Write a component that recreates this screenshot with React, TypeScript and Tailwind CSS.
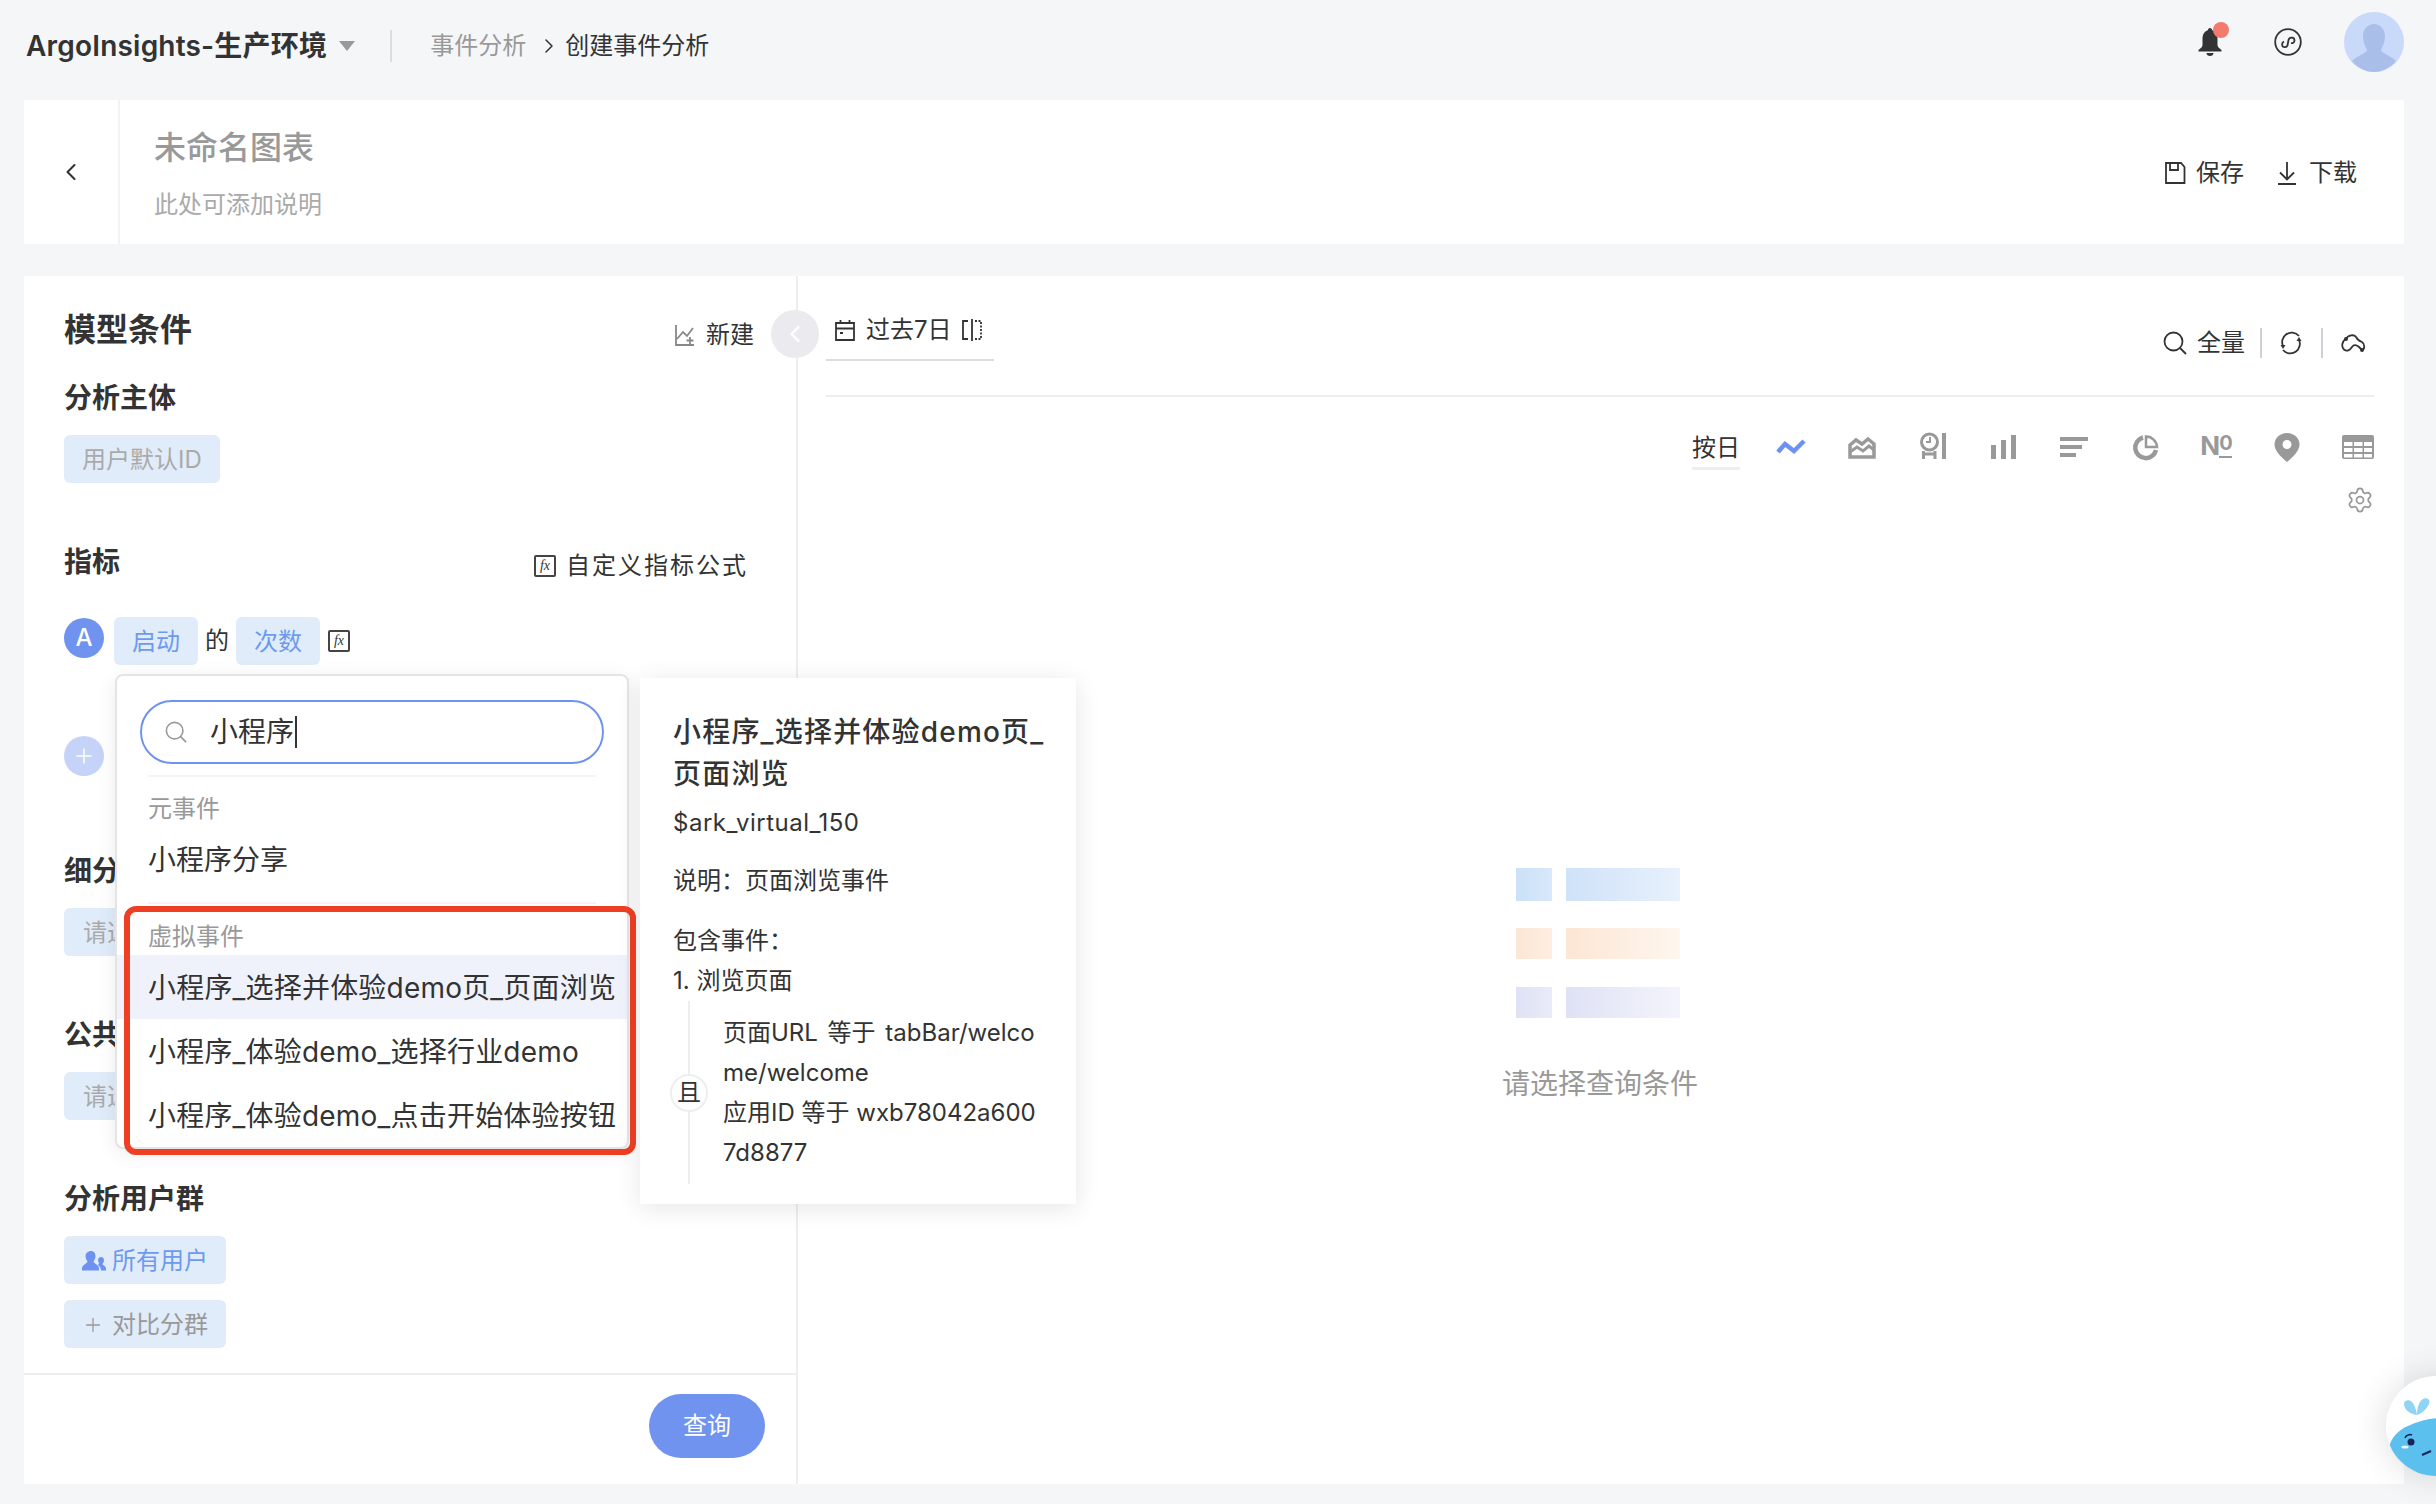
import { ChevronLeft, ChevronRight, Plus, Settings } from 'lucide-react';

function FxIcon() {
  return (
    <span className="flex h-[22px] w-[22px] items-center justify-center border-2 border-[#444] rounded-[2px] font-['Liberation_Serif',serif] text-[14px] italic leading-none text-[#333]">
      fx
    </span>
  );
}

function SearchIcon({ className, stroke }: { className: string; stroke: string }) {
  return (
    <svg className={className} viewBox="0 0 24 24" fill="none" stroke={stroke} strokeWidth="1.800">
      <circle cx="10.500" cy="10.500" r="9" />
      <path d="M17 17l6 6" />
    </svg>
  );
}

function Tag({ children, className = '' }: { children: React.ReactNode; className?: string }) {
  return (
    <div className={`flex h-12 items-center rounded-[6px] bg-[#e0ecf9] pt-px text-[24px] ${className}`}>{children}</div>
  );
}

function SectionTitle({ children, className = '' }: { children: React.ReactNode; className?: string }) {
  return <div className={`h-10 pt-px text-[28px] font-semibold leading-10 text-[#333] ${className}`}>{children}</div>;
}

function ChartTypes() {
  return (
    <div className="flex gap-[39px] text-[#999]">
      <svg className="h-8 w-8" viewBox="0 0 32 32" fill="none" stroke="#6d91f0" strokeWidth="4.500">
        <polyline points="4,21 11,13 20,20 30,10" />
      </svg>
      <svg className="h-8 w-8" viewBox="0 0 32 32" fill="none" stroke="#999" strokeWidth="3.500">
        <path d="M5 26V14l6-5 6 4 6-5 6 5v13z" />
        <path d="M5 21l7-5 6 4 6-5 5 4" strokeWidth="3" />
      </svg>
      <svg className="h-8 w-8" viewBox="0 0 32 32" fill="none" stroke="#999" strokeWidth="3">
        <circle cx="13.500" cy="11" r="8" />
        <path d="M14 6v5h-4" strokeWidth="2" />
        <path d="M7.500 28v-8M19 28v-8M8 23h10" />
        <path d="M28 2v26" strokeWidth="4" />
      </svg>
      <svg className="h-8 w-8" viewBox="0 0 32 32" fill="#999">
        <rect x="4" y="14" width="5" height="14" />
        <rect x="14" y="9" width="5" height="19" />
        <rect x="24" y="4" width="5" height="24" />
      </svg>
      <svg className="h-8 w-8" viewBox="0 0 32 32" fill="#999">
        <rect x="2" y="6" width="28" height="4" />
        <rect x="2" y="14" width="22" height="4" />
        <rect x="2" y="22" width="16" height="4" />
      </svg>
      <svg className="h-8 w-8" viewBox="0 0 32 32" fill="none" stroke="#999">
        <path d="M14 6.500A10.500 10.500 0 1 0 27 19" strokeWidth="4.500" />
        <path d="M17 5.500v10.500h11A11 11 0 0 0 17 5.500z" strokeWidth="2.500" fill="#fff" />
      </svg>
      <div className="relative flex h-8 w-8 items-start justify-center text-[26px] font-bold leading-[30px] tracking-[-1px] text-[#999]">
        <span>N</span>
        <span className="border-b-2 border-[#999] text-[20px] leading-[25px]">0</span>
      </div>
      <svg className="h-8 w-8" viewBox="0 0 32 32" fill="#999">
        <path
          fillRule="evenodd"
          d="M16 2c7 0 12.500 5 12.500 11.500 0 6-6 12-12.500 17.500C9.500 25.500 3.500 19.500 3.500 13.500 3.500 7 9 2 16 2zm0 7a4.500 4.500 0 1 0 0 9 4.500 4.500 0 0 0 0-9z"
        />
      </svg>
      <svg className="h-8 w-8" viewBox="0 0 32 32" fill="none">
        <rect x="0" y="4" width="32" height="24" rx="2" fill="#999" />
        <g fill="#fff">
          <rect x="2" y="11" width="8.500" height="4" />
          <rect x="12" y="11" width="8.500" height="4" />
          <rect x="22" y="11" width="8" height="4" />
          <rect x="2" y="17" width="8.500" height="4" />
          <rect x="12" y="17" width="8.500" height="4" />
          <rect x="22" y="17" width="8" height="4" />
          <rect x="2" y="23" width="8.500" height="3.500" />
          <rect x="12" y="23" width="8.500" height="3.500" />
          <rect x="22" y="23" width="8" height="3.500" />
        </g>
      </svg>
    </div>
  );
}

function EventDropdown() {
  const rows = ['小程序_选择并体验demo页_页面浏览', '小程序_体验demo_选择行业demo', '小程序_体验demo_点击开始体验按钮'];
  return (
    <div className="absolute left-[91px] top-[398px] z-20 w-[514px] rounded-[8px] border-2 border-[#e4e4e4] bg-white pt-6 shadow-[0_4px_20px_rgba(0,0,0,0.08)]">
      <div className="ml-[23px] flex h-16 w-[464px] items-center rounded-full border-2 border-[#6f93ee] pl-[23px]">
        <SearchIcon className="h-[22px] w-[22px]" stroke="#999" />
        <span className="ml-[23px] text-[28px] leading-8 text-[#333]">小程序</span>
        <span className="ml-px h-8 w-[2px] bg-[#333]" />
      </div>
      <div className="mx-[31px] mt-[11px] h-[2px] bg-[#f2f4f9]" />
      <div className="ml-[31px] mt-[15px] h-[35px] text-[24px] leading-[34px] text-[#999]">元事件</div>
      <div className="flex h-16 items-center px-[31px] pt-[2px] text-[28px] text-[#333]">小程序分享</div>
      <div className="mx-[31px] mt-[11px] h-[2px] bg-[#f2f4f9]" />
      <div className="ml-[31px] mt-[15px] h-[34px] pt-px text-[24px] leading-[34px] text-[#999]">虚拟事件</div>
      <div className="mt-[2px]">
        {rows.map((row, i) => (
          <div
            key={row}
            className={`flex h-16 items-center whitespace-nowrap pl-[31px] pt-[2px] text-[28px] tracking-[0.2px] text-[#333] ${i === 0 ? 'bg-[#eff2fb]' : ''}`}
          >
            {row}
          </div>
        ))}
      </div>
      <div className="absolute left-[7px] top-[230px] h-[249px] w-[512px] rounded-[12px] border-[6px] border-[#ee3f24]" />
    </div>
  );
}

function EventDetail() {
  return (
    <div className="absolute left-[616px] top-[402px] z-20 h-[526px] w-[436px] bg-white pl-[33px] pt-[33px] text-[24px] text-[#333] shadow-[0_4px_24px_rgba(0,0,0,0.1)]">
      <div className="text-[28px] font-medium leading-[42px] tracking-[1.2px]">
        <div>小程序_选择并体验demo页_</div>
        <div>页面浏览</div>
      </div>
      <div className="mt-[8px] leading-10 tracking-[0.5px]">$ark_virtual_150</div>
      <div className="mt-[18px] leading-10">说明：页面浏览事件</div>
      <div className="mt-[20px] leading-10">包含事件：</div>
      <div className="leading-10">1. 浏览页面</div>
      <div className="relative">
        <div className="absolute bottom-0 left-[15px] top-0 w-[2px] bg-[#eeeeee]" />
        <div className="absolute left-[-3px] top-[73px] flex h-[38px] w-[38px] items-center justify-center rounded-full border-2 border-[#eee] bg-white">
          且
        </div>
        <div className="whitespace-nowrap pb-[11px] pl-[50px] pt-[12px] leading-10">
          <div className="[word-spacing:3px]">页面URL 等于 tabBar/welco</div>
          <div>me/welcome</div>
          <div>应用ID 等于 wxb78042a600</div>
          <div>7d8877</div>
        </div>
      </div>
    </div>
  );
}

export default function App() {
  return (
    <div className="relative h-[1504px] w-[2436px] overflow-hidden bg-[#f5f6f8] pl-6 pr-8 font-[Inter,'Noto_Sans_CJK_SC',sans-serif]">
      {/* top bar */}
      <header className="flex h-[100px] items-center pb-4">
        <div className="mt-2 flex items-center">
          <span className="ml-[2px] text-[28px] font-semibold tracking-[0.2px] text-[#333]">ArgoInsights-生产环境</span>
          <span className="ml-[12px] h-0 w-0 border-x-[8px] border-t-[10px] border-x-transparent border-t-[#999]" />
          <span className="ml-[35px] h-8 w-[2px] bg-[#ddd]" />
          <span className="ml-[38px] text-[24px] text-[#999]">事件分析</span>
          <ChevronRight className="ml-[11px] h-6 w-6 text-[#333]" strokeWidth={1.5} />
          <span className="ml-[4px] text-[24px] text-[#333]">创建事件分析</span>
        </div>
        <div className="ml-auto flex items-center">
          <div className="relative mr-[52px]">
            <svg className="h-7 w-[24px]" viewBox="0 0 24 28" fill="#333">
              <path d="M12 0c1.500 0 2 1 2 2 4 1.500 5.500 5 5.500 9v6c0 2 2 3.500 4 5v1.500H.500V22c2-1.500 4-3 4-5v-6c0-4 1.500-7.500 5.500-9 0-1 .5-2 2-2z" />
              <path d="M8.500 25h7c0 2-1.500 3-3.500 3s-3.500-1-3.500-3z" />
            </svg>
            <span className="absolute -top-[6px] left-[15px] h-4 w-4 rounded-full bg-[#f27b6d]" />
          </div>
          <svg className="mr-[42px] h-7 w-7" viewBox="0 0 28 28" fill="none" stroke="#333" strokeWidth="1.800">
            <circle cx="14" cy="14" r="12.800" />
            <path d="M8 18.500c.5 2.500 4 3 5.500.5l1-5.500c1-3.500 6-3 6 .5 0 2-2 3-3.500 2.500M10 15c-1.200.5-2 2-2 3.500" transform="translate(0 -1.500)" />
          </svg>
          <svg className="h-[60px] w-[60px]" viewBox="0 0 60 60">
            <circle cx="30" cy="30" r="30" fill="#c9d9f9" />
            <path
              d="M30 12c6 0 11 5 11 12 0 7-3 11-4 14 0 3 9 5 15 11-5 6-13 11-22 11s-17-5-22-11c6-6 15-8 15-11-1-3-4-7-4-14 0-7 5-12 11-12z"
              fill="#a9bfea"
            />
          </svg>
        </div>
      </header>

      {/* chart title card */}
      <section className="flex h-[144px] bg-white">
        <div className="flex w-[96px] items-center justify-center border-r-2 border-[#f3f3f3]">
          <ChevronLeft className="h-7 w-7 text-[#333]" strokeWidth={1.8} />
        </div>
        <div className="flex flex-1 flex-col pl-[34px]">
          <div className="mt-[25px] h-12 text-[32px] font-medium leading-[46px] text-[#999]">未命名图表</div>
          <div className="mt-[14px] text-[24px] leading-9 text-[#aaa]">此处可添加说明</div>
        </div>
        <div className="flex items-center pr-[47px] pt-[2px] text-[24px] text-[#333]">
          <svg className="h-6 w-[22px]" viewBox="0 0 22 24" fill="none" stroke="#333" strokeWidth="1.800">
            <path d="M2 2h15l3.500 4v16H2zM6 2v7h8V2" />
          </svg>
          <span className="ml-[10px]">保存</span>
          <svg className="ml-[33px] h-6 w-[20px]" viewBox="0 0 20 24" fill="none" stroke="#333" strokeWidth="1.800">
            <path d="M10 1v17M3 11.500l7 7 7-7M1 23h18" />
          </svg>
          <span className="ml-[12px]">下载</span>
        </div>
      </section>

      {/* query + result */}
      <section className="mt-8 flex h-[1208px] bg-white">
        <aside className="relative z-10 flex w-[774px] flex-col border-r-2 border-[#eeeeee]">
          <div className="flex-1 pl-10 pr-[42px]">
            <div className="mt-7 flex h-12 items-start justify-between">
              <span className="mt-[2px] text-[32px] font-semibold leading-12 text-[#333]">模型条件</span>
              <div className="mt-[7px] flex h-12 items-center text-[24px] text-[#333]">
                <svg className="h-6 w-[22px]" viewBox="0 0 22 24" fill="none" stroke="#888" strokeWidth="1.800">
                  <path d="M2 2v20h18M3 16l6-7 4 4 6-8M16 14v7M12.500 17.500h7" />
                </svg>
                <span className="ml-[10px]">新建</span>
              </div>
            </div>
            <SectionTitle className="mt-[25px]">分析主体</SectionTitle>
            <Tag className="mt-[18px] w-[156px] justify-center text-[#aaa]">用户默认ID</Tag>
            <div className="mt-[58px] flex h-10 justify-between">
              <SectionTitle>指标</SectionTitle>
              <div className="mr-[6px] mt-[10px] flex items-center text-[24px] text-[#333]">
                <FxIcon />
                <span className="ml-[10px] tracking-[2px]">自定义指标公式</span>
              </div>
            </div>
            <div className="mt-9 flex items-center">
              <span className="mt-[-6px] flex h-10 w-10 items-center justify-center rounded-full bg-[#6f93ee] text-[24px] font-medium text-white">
                A
              </span>
              <Tag className="ml-[10px] w-[84px] justify-center text-[#6d9aef]">启动</Tag>
              <span className="ml-[7px] text-[24px] text-[#333]">的</span>
              <Tag className="ml-[7px] w-[84px] justify-center text-[#6d9aef]">次数</Tag>
              <span className="ml-2">
                <FxIcon />
              </span>
            </div>
            <span className="mt-[71px] flex h-10 w-10 items-center justify-center rounded-full bg-[#c4d3f7]">
              <Plus className="h-6 w-6 text-white" strokeWidth={1.5} />
            </span>
            <SectionTitle className="mt-[74px]">细分维度</SectionTitle>
            <Tag className="mt-[18px] w-[170px] pl-[19px] text-[#aaa]">请选择维度</Tag>
            <SectionTitle className="mt-[58px]">公共筛选</SectionTitle>
            <Tag className="mt-[18px] w-[170px] pl-[19px] text-[#aaa]">请选择筛选</Tag>
            <SectionTitle className="mt-[58px]">分析用户群</SectionTitle>
            <Tag className="mt-[18px] w-[162px] pl-[18px] text-[#6d9aef]">
              <svg className="h-[22px] w-[24px]" viewBox="0 0 24 22" fill="#6d91f0">
                <path d="M9 1c3 0 4.500 2.500 4.500 5 0 2-1 4-2 5.500 0 1.500 3.500 2.500 5 5 .5 1 .5 2.500.5 4H0c0-1.500 0-3 .5-4 1.500-2.500 5-3.500 5-5-1-1.500-2-3.500-2-5.500C3.500 3.500 6 1 9 1z" />
                <path d="M19 7c2 0 3 1.500 3 3.500 0 1.500-1 2.500-1.500 3.500 0 1 2 1.500 3 3 .5.500.5 2 .5 3.500h-5c0-2-1-4-3-5.500 .5-1 1-1.500 1-2-.5-1-1-2-1-3C16 8.500 17 7 19 7z" />
              </svg>
              <span className="ml-[6px]">所有用户</span>
            </Tag>
            <Tag className="mt-4 w-[162px] pl-[18px] text-[#999]">
              <Plus className="h-[22px] w-[22px]" strokeWidth={1.4} />
              <span className="ml-[8px]">对比分群</span>
            </Tag>
          </div>
          <div className="flex h-[111px] justify-end border-t-2 border-[#eeeeee] pr-[31px] pt-[19px]">
            <button className="h-16 w-[116px] rounded-full bg-[#6f93ee] text-[24px] text-white">查询</button>
          </div>
          <div className="absolute left-[747px] top-[34px] flex h-12 w-12 items-center justify-center rounded-full bg-[#ebebef]">
            <ChevronLeft className="h-7 w-7 text-white" strokeWidth={2} />
          </div>
          <EventDropdown />
          <EventDetail />
        </aside>

        <main className="flex flex-1 flex-col pl-7 pr-[30px]">
          <div className="flex h-[121px] items-start justify-between border-b-2 border-[#eeeeee]">
            <div className="mt-[30px] flex h-[55px] w-[168px] items-start border-b-2 border-[#dddddd] pl-[9px] pt-[6px] text-[24px] text-[#333]">
              <div className="flex h-9 items-center">
                <svg className="h-[22px] w-5" viewBox="0 0 20 22" fill="none" stroke="#333" strokeWidth="1.800">
                  <path d="M1 4h18v17H1zM1 9.500h18M5.500 1v4M14.500 1v4M5 14h3" />
                </svg>
                <span className="ml-[11px]">过去7日</span>
                <svg className="ml-[10px] h-[22px] w-5" viewBox="0 0 20 22" fill="none" stroke="#333" strokeWidth="1.800">
                  <path d="M6 2H1v18h5M10 0v22" />
                  <path d="M13 2h6v18h-6" strokeDasharray="2 1.500" />
                </svg>
              </div>
            </div>
            <div className="mt-[51px] flex h-8 items-center text-[24px] text-[#333]">
              <SearchIcon className="h-6 w-6" stroke="#333" />
              <span className="ml-[10px]">全量</span>
              <span className="ml-[15px] h-[30px] w-[2px] bg-[#cfd0d6]" />
              <svg className="ml-[17px] h-[24px] w-[24px]" viewBox="0 0 24 24" fill="none" stroke="#333" strokeWidth="1.800">
                <path d="M4 15a9.500 9.500 0 0 1 3-11.500A9.500 9.500 0 0 1 20 5M20 9a9.500 9.500 0 0 1-3 11.500A9.500 9.500 0 0 1 4 19" />
                <path d="M1.500 14h5l-2.500 4zM22.500 10h-5l2.500-4z" fill="#333" stroke="none" />
              </svg>
              <span className="ml-[18px] h-[30px] w-[2px] bg-[#cfd0d6]" />
              <svg className="ml-[18px] mr-[8px] h-[18px] w-[25px]" viewBox="0 0 25 18" fill="none" stroke="#333" strokeWidth="1.800">
                <path d="M5 5C7 1 13 0 15 3c1.500 3 3 4 6 5 3 2 3 7 0 8" />
                <path d="M5 5C1 7 0 13 3 15.500c3 2.500 6 .5 8-2.500 2-3 5-2 7 0l3 3" />
                <circle cx="5" cy="5" r="2" fill="#333" stroke="none" />
                <circle cx="21" cy="16" r="2" fill="#333" stroke="none" />
              </svg>
            </div>
          </div>

          <div className="mt-[34px] flex justify-end">
            <div className="h-[39px] w-12 border-b-[3px] border-[#eeeeee] text-[24px] leading-[34px] text-[#333]">按日</div>
            <div className="ml-[34px]">
              <ChartTypes />
            </div>
          </div>
          <div className="mt-4 flex justify-end">
            <Settings className="h-7 w-7 text-[#999]" strokeWidth={1.5} />
          </div>

          <div className="flex flex-1 flex-col items-center">
            <div className="mr-[4px] mt-[354px] flex w-[164px] flex-col">
              <div className="flex h-[33px] gap-[14px]">
                <div className="w-9 bg-gradient-to-r from-[#cbe1f7] to-[#d9e8fa]" />
                <div className="w-[114px] bg-gradient-to-r from-[#cfe2f8] to-[#e8f1fc]" />
              </div>
              <div className="mt-[27px] flex h-[31px] gap-[14px]">
                <div className="w-9 bg-gradient-to-r from-[#fce6d4] to-[#fdeee2]" />
                <div className="w-[114px] bg-gradient-to-r from-[#fce6d4] to-[#fef6ef]" />
              </div>
              <div className="mt-[28px] flex h-[31px] gap-[14px]">
                <div className="w-9 bg-gradient-to-r from-[#dfe2f5] to-[#e9ebf8]" />
                <div className="w-[114px] bg-gradient-to-r from-[#dfe2f5] to-[#f3f4fb]" />
              </div>
            </div>
            <div className="mt-[46px] text-[28px] leading-10 text-[#999]">请选择查询条件</div>
          </div>
        </main>
      </section>

      {/* floating helper */}
      <div className="absolute left-[2386px] top-[1376px] h-[100px] w-[100px] rounded-full bg-white shadow-[0_0_36px_rgba(0,0,0,0.14)]">
        <svg className="h-[100px] w-[100px]" viewBox="0 0 100 100">
          <defs>
            <clipPath id="whale-clip">
              <circle cx="50" cy="50" r="50" />
            </clipPath>
          </defs>
          <g clipPath="url(#whale-clip)">
            <ellipse cx="58" cy="74" rx="55" ry="32" fill="#5cc0ee" />
            <path d="M31 39c-8-1-13-6-13-11 0-4 5-5 8-2 2 2 4 7 5 13z" fill="#8fd4f5" />
            <path d="M31 39c0-5 1-13 6-16 4-2 8 1 6 5-2 5-7 9-12 11z" fill="#8fd4f5" />
            <circle cx="25" cy="66" r="3.500" fill="#16245a" />
            <path d="M19 62c1-3 5-4 7-3" stroke="#16245a" strokeWidth="1.500" fill="none" />
            <ellipse cx="19" cy="71" rx="3.500" ry="1.500" fill="#e8f6fd" />
            <path d="M36 79l9-4" stroke="#16245a" strokeWidth="2" fill="none" />
          </g>
        </svg>
      </div>
    </div>
  );
}
